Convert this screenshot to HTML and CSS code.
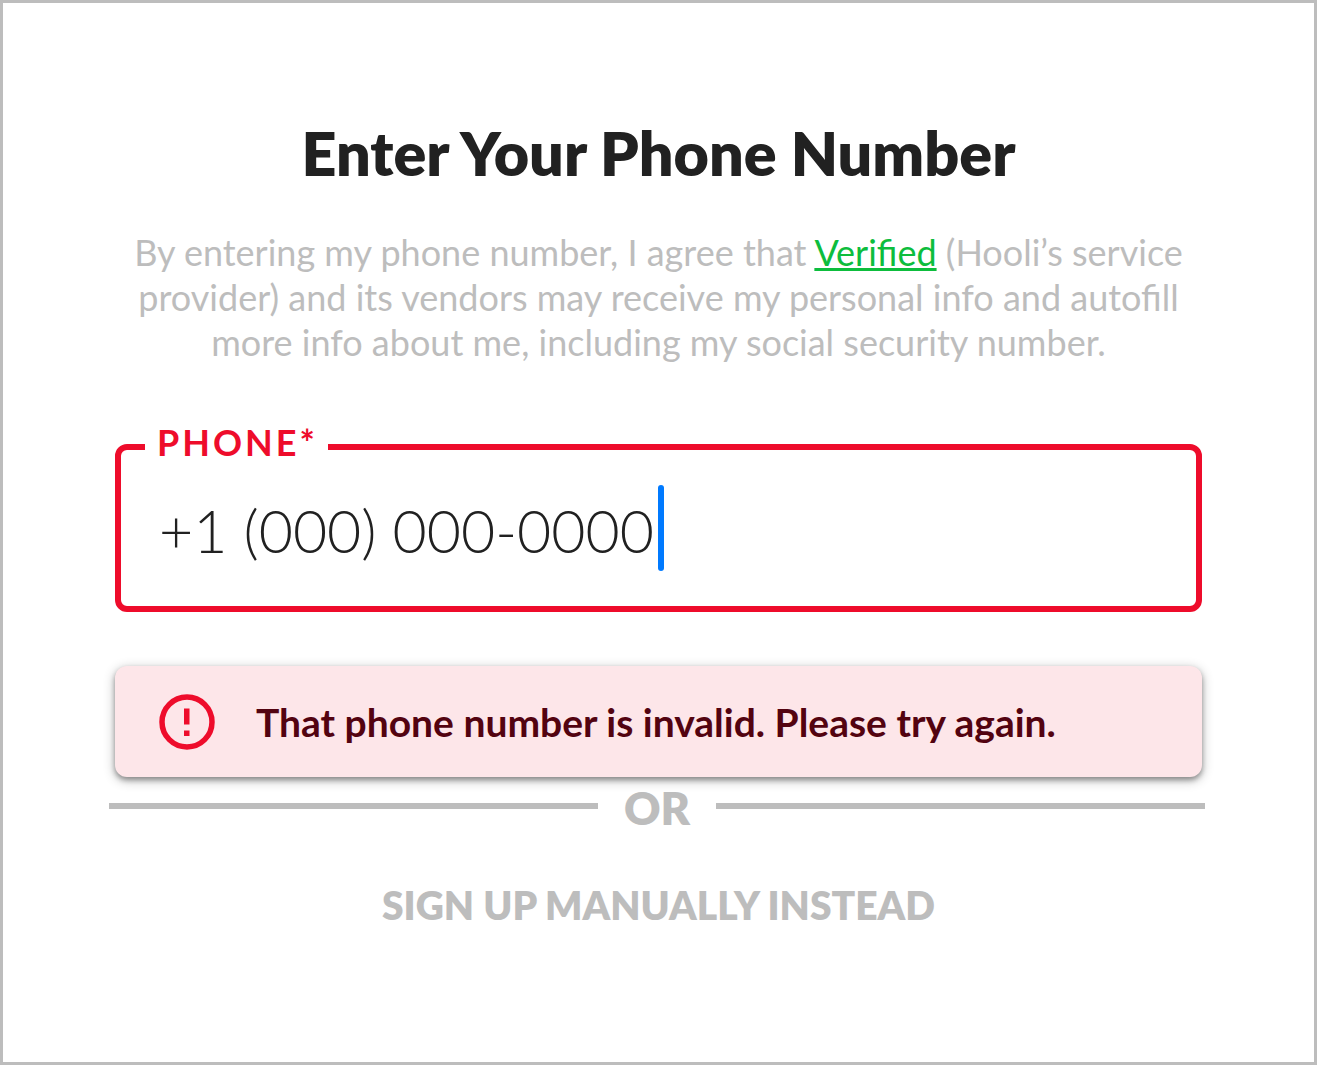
FILE: index.html
```html
<!DOCTYPE html>
<html lang="en">
<head>
<meta charset="utf-8">
<meta name="viewport" content="width=device-width, initial-scale=1">
<title>Enter Your Phone Number</title>
<link rel="stylesheet" href="styles.css">
</head>
<body>
<main class="card">
  <h1 class="title">Enter Your Phone Number</h1>
  <p class="consent">By entering my phone number, I agree that <a class="consent-link" href="#verified">Verified</a> (Hooli’s service provider) and its vendors may receive my personal info and autofill more info about me, including my social security number.</p>
  <form class="form">
    <fieldset class="field">
      <legend class="field-legend"><label for="phone">PHONE*</label></legend>
      <div class="field-row">
        <input class="field-input" id="phone" type="tel" value="+1 (000) 000-0000" aria-invalid="true" aria-describedby="phone-error">
        <span class="caret"></span>
      </div>
    </fieldset>
    <div class="alert" id="phone-error" role="alert">
      <svg class="alert-icon" viewBox="0 0 56 56" aria-hidden="true">
        <circle cx="28" cy="28" r="25" fill="none" stroke="currentColor" stroke-width="5.5"/>
        <path d="M25 14.500h5.500v16h-5.500zM25 36.500h5.500v5.500h-5.500z" fill="currentColor"/>
      </svg>
      <span>That phone number is invalid. Please try again.</span>
    </div>
    <div class="divider"><span class="divider-text">OR</span></div>
    <button class="manual" type="button">SIGN UP MANUALLY INSTEAD</button>
  </form>
</main>
</body>
</html>
```

FILE: styles.css
```css
* {
  box-sizing: border-box;
}

body {
  margin: 0;
  font-family: Lato, "Liberation Sans", sans-serif;
  background: #fff;
}

.card {
  min-height: 100vh;
  padding: 114px 106px 0;
  border: 3px solid #bdbdbd;
  text-align: center;
}

.title {
  margin: 0;
  font-size: 61px;
  line-height: 72px;
  font-weight: 800;
  color: #212121;
}

.consent {
  max-width: 1060px;
  margin: 41px auto 0;
  font-size: 36px;
  line-height: 45px;
  color: #bdbdbd;
}

.consent-link {
  color: #0dbd3d;
  text-decoration-thickness: 3px;
}

.form {
  display: flex;
  flex-direction: column;
  margin-top: 56px;
}

.field {
  min-width: 0;
  margin: 0 6px;
  padding: 12px 36px 35px 24px;
  border: 6px solid #ee0c2b;
  border-radius: 12px;
  text-align: left;
}

.field-legend {
  padding: 0 10px 10px 12px;
  font-size: 36px;
  line-height: 42px;
  font-weight: 700;
  letter-spacing: 3px;
  color: #ee0c2b;
}

.field-row {
  display: flex;
  align-items: center;
  padding-left: 14px;
}

.field-input {
  width: 499px;
  height: 86px;
  padding: 4px 0 0;
  border: 0;
  outline: 0;
  background: none;
  font: 300 59px/82px Lato, "Liberation Sans", sans-serif;
  color: #212121;
}

.caret {
  width: 6px;
  height: 86px;
  border-radius: 3px;
  background: #007aff;
}

.alert {
  display: flex;
  align-items: center;
  gap: 41px;
  min-height: 111px;
  margin: 54px 6px 0;
  padding: 0 44px;
  border-radius: 12px;
  background: #fde6e9;
  box-shadow: 0 3px 12px rgba(0, 0, 0, 0.3), 0 3px 5px rgba(0, 0, 0, 0.3);
  font-size: 39px;
  line-height: 48px;
  font-weight: 700;
  color: #530310;
  text-align: left;
}

.alert-icon {
  flex: none;
  width: 56px;
  height: 56px;
  color: #ee0c2b;
}

.divider {
  display: flex;
  align-items: center;
  gap: 26px;
  padding-right: 3px;
  font-size: 45px;
  line-height: 54px;
  font-weight: 800;
  color: #bdbdbd;
}

.divider-text {
  padding-top: 4px;
}

.divider::before,
.divider::after {
  content: "";
  flex: 1;
  height: 6px;
  background: #bdbdbd;
}

.manual {
  align-self: center;
  margin-top: 46px;
  padding: 0;
  border: 0;
  background: none;
  font: 800 39px/48px Lato, "Liberation Sans", sans-serif;
  color: #bdbdbd;
}
```
